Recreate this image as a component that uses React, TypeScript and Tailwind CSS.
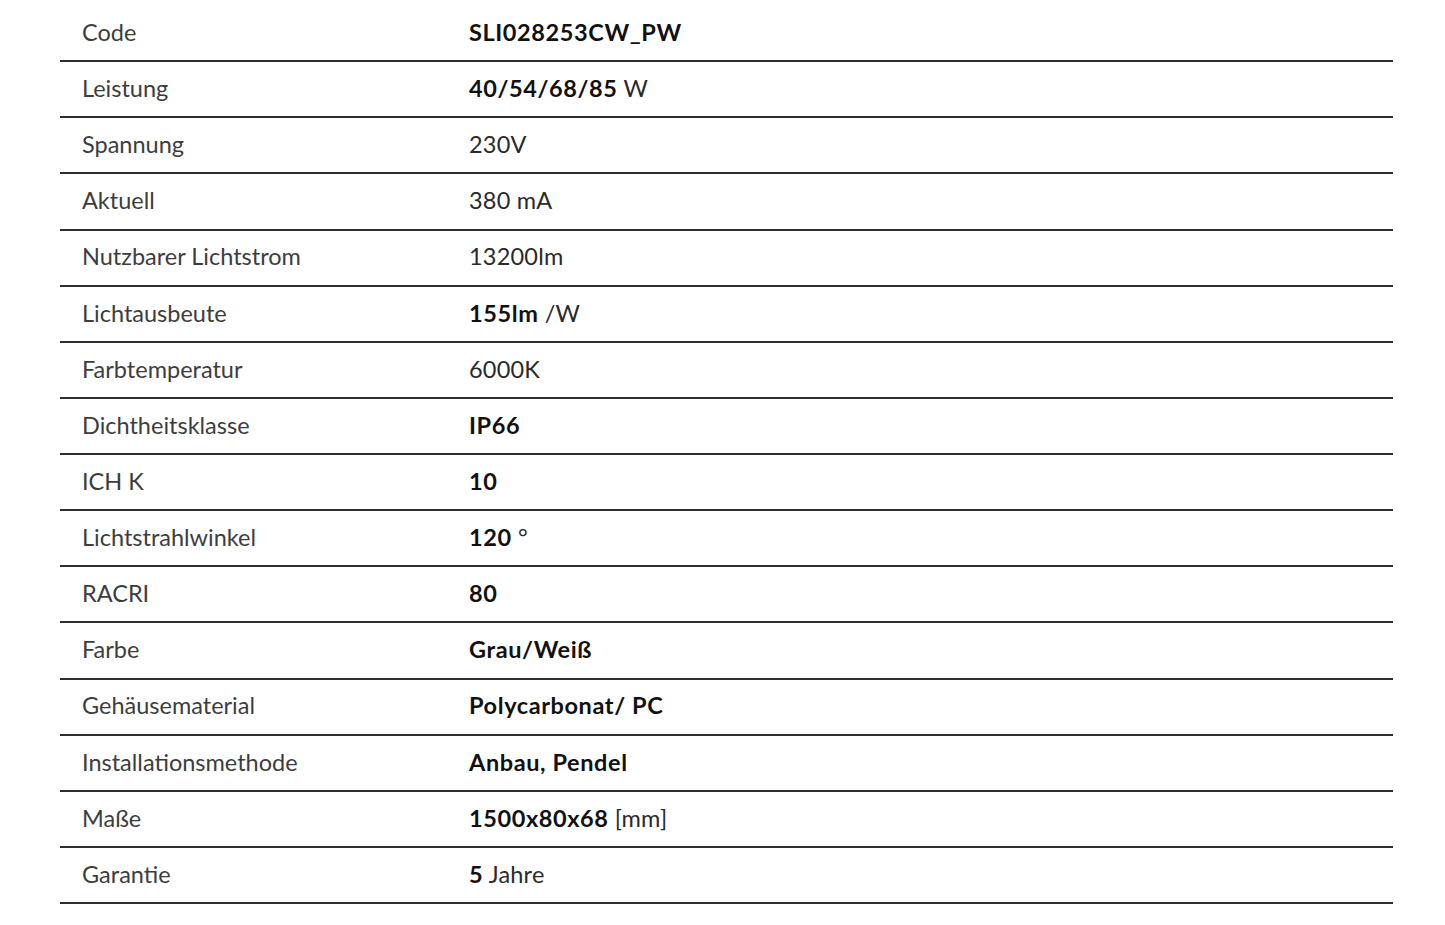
const rows: { label: string; bold?: string; rest?: string }[] = [
  { label: 'Code', bold: 'SLI028253CW_PW' },
  { label: 'Leistung', bold: '40/54/68/85', rest: ' W' },
  { label: 'Spannung', rest: '230V' },
  { label: 'Aktuell', rest: '380 mA' },
  { label: 'Nutzbarer Lichtstrom', rest: '13200lm' },
  { label: 'Lichtausbeute', bold: '155lm', rest: ' /W' },
  { label: 'Farbtemperatur', rest: '6000K' },
  { label: 'Dichtheitsklasse', bold: 'IP66' },
  { label: 'ICH K', bold: '10' },
  { label: 'Lichtstrahlwinkel', bold: '120', rest: ' °' },
  { label: 'RACRI', bold: '80' },
  { label: 'Farbe', bold: 'Grau/Weiß' },
  { label: 'Gehäusematerial', bold: 'Polycarbonat/ PC' },
  { label: 'Installationsmethode', bold: 'Anbau, Pendel' },
  { label: 'Maße', bold: '1500x80x68', rest: ' [mm]' },
  { label: 'Garantie', bold: '5', rest: ' Jahre' },
]

export default function App() {
  return (
    <div className="min-h-screen bg-white pt-[6px] px-[60px] font-['Lato','Open_Sans',sans-serif] text-[23.5px]">
      <div className="w-[1333px]">
        {rows.map((r) => (
          <div
            key={r.label}
            className="flex h-[56.13px] items-center pb-[1px] border-b-2 border-[#2e2e2e]"
          >
            <div className="w-[409px] pl-[22px] text-[#3d3d3d]">{r.label}</div>
            <div className="text-[#2a2a2a] tracking-[0.2px]">
              {r.bold && <span className="font-bold text-[#111] tracking-[0.6px]">{r.bold}</span>}
              {r.rest}
            </div>
          </div>
        ))}
      </div>
    </div>
  )
}
